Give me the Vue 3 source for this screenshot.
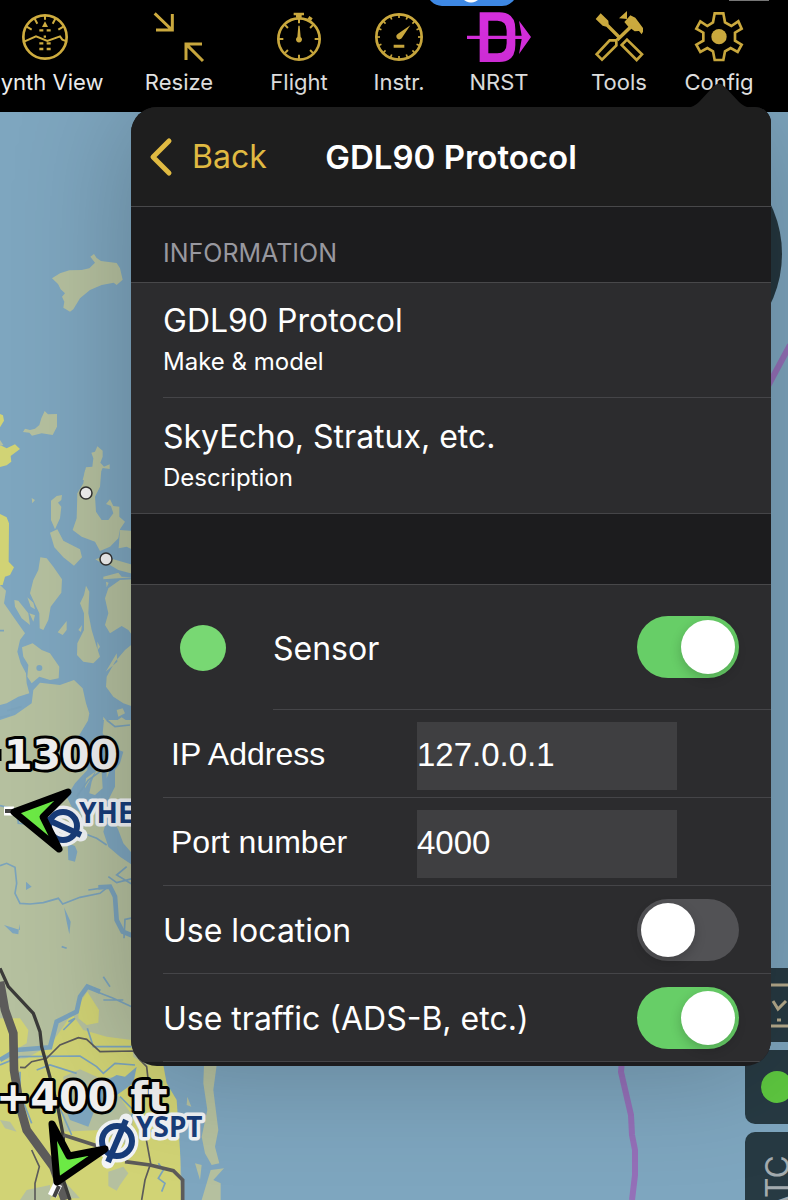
<script setup>
import { ref } from 'vue'

const information = [
  { value: 'GDL90 Protocol', caption: 'Make & model' },
  { value: 'SkyEcho, Stratux, etc.', caption: 'Description' }
]

const sensor = ref(true)
const ipAddress = ref('127.0.0.1')
const port = ref('4000')
const useLocation = ref(false)
const useTraffic = ref(true)

const flightTicks = [0, 45, 90, 135, 180, 225, 270, 315]
const gaugeTicks = Array.from({ length: 16 }, (_, i) => i * 22.5)
</script>

<template>
  <div class="app">
    <svg class="map" viewBox="0 0 788 1200" preserveAspectRatio="xMinYMin slice" aria-hidden="true">
      <rect width="788" height="1200" class="sea" />

      <!-- northern islands -->
      <g transform="translate(0 230) scale(0.33333)">
        <path class="land" d="M156 145L180 130L208 121L245 120L268 115L285 98L271 80L282 72L290 84L303 93L350 99L360 115L368 149L350 165L341 158L305 165L270 180L240 205L220 238L210 245L190 233L193 215L186 200L195 190L182 178L174 162Z" />
        <path class="land" d="M69 606L75 596L90 600L105 596L118 585L124 565L134 543L144 553L171 552L171 590L158 615L125 610L96 617L88 608Z" />
        <path class="land" d="M248 750L258 712L277 710L280 685L274 668L285 665L292 649L308 662L308 680L301 698L312 710L329 703L329 717L308 714L300 730L300 750Z" />
        <path class="field" d="M0 552L9 556L12 572L0 592ZM0 645L20 655L45 643L60 657L32 678L34 695L20 706L0 711Z" />
        <path class="land" d="M0 630L10 645L0 648Z" />
      </g>

      <!-- archipelago -->
      <g transform="translate(0 470) scale(0.33333)">
        <path class="land" d="M255 0L304 0L300 50L285 80L288 125L305 150L325 150L340 130L333 108L318 102L330 88L340 108L358 110L358 140L375 155L360 178L355 205L330 230L300 243L285 215L245 200L218 180L230 145L232 70L250 40Z" />
        <path class="land" d="M360 180L400 183L400 240L380 230L356 235ZM286 268L305 262L340 268L400 285L400 312L355 300L330 285L305 280ZM310 320L355 308L365 320L400 322L310 328Z" />
        <path class="land" d="M153 92L170 78L186 75L184 90L174 98L184 110L180 145L165 178L153 150ZM150 188L172 178L190 212L240 238L246 262L222 287L190 262L163 232Z" />
        <path class="land" d="M121 262L140 265L160 290L186 328L184 368L152 410L145 450L130 480L119 475L118 430L90 370L100 330L115 300Z" />
        <path class="land" d="M43 390L55 392L85 430L90 465L65 445L45 410ZM82 382L100 398L105 418L92 410ZM88 430L105 436L100 455ZM95 84L105 90L97 100ZM173 487L200 453L200 480L188 495Z" />
        <path class="land" d="M258 347L268 365L265 430L275 480L290 530L300 560L280 580L250 575L231 555L232 520L252 480L252 430L240 400L252 375ZM235 480L246 465L243 486ZM292 515L300 530L293 540Z" />
        <path class="land" d="M66 532L98 520L125 540L150 550L178 590L176 625L150 630L118 620L95 640L82 620L85 585L70 560Z" />
        <path class="land" d="M400 328L360 330L325 355L315 385L325 430L315 465L330 490L365 468L385 480L400 500ZM318 335L326 338L320 352ZM400 520L375 540L345 575L320 620L318 650L340 680L370 700L400 710ZM317 605L335 575L350 550L352 575Z" />
        <path class="field" d="M0 132L20 142L27 160L26 275L42 292L30 315L15 320L8 345L0 345Z" />
        <path class="land" d="M0 345L18 362L12 400L40 440L75 490L60 510L52 545L62 580L78 610L80 640L88 670L55 680L20 700L0 705ZM0 780L0 750L45 735L95 700L100 660L120 638L180 645L222 630L248 655L258 700L268 730L262 762L240 780Z" />
        <path class="land" d="M310 740L322 755L315 780L308 775ZM350 720L368 715L375 730L355 740ZM345 755L365 742L385 755L380 768L355 768Z" />
        <circle cx="118" cy="594" r="9" class="sea" />
        <path class="creek" d="M0 482L12 482M22 722L65 710M0 742L30 735" />
        <path class="land" d="M320 780L340 772L400 770L400 780Z" />
      </g>

      <!-- mainland -->
      <g transform="translate(0 720) scale(0.33333)">
        <path class="land" d="M0 0L400 0L400 740L0 740Z" />
        <path class="sea" d="M265 0L312 0L308 40L330 80L370 95L360 130L345 150L345 200L325 240L335 290L355 330L370 370L405 410L405 440L360 410L325 380L310 335L320 300L300 275L245 280L215 260L200 230L225 190L262 150L262 120L235 85L235 50Z" />
        <path class="land" d="M288 152L305 155L308 205L285 225L268 220L275 185ZM320 110L345 110L320 175ZM258 175L285 155L255 205Z" />
        <path class="sea" d="M203 370L225 378L232 395L225 425L205 420ZM78 485L95 500L78 510ZM192 562L212 605L208 643L200 605ZM12 615L60 630L58 612L55 643L38 640Z" />
        <path class="creek" d="M0 257L50 268L55 310L145 318M0 437L20 430L45 442L50 490L45 520L60 550L90 552L130 548L175 535L188 552L240 532L300 520L325 500M230 230L265 180L300 155M250 340L290 355L320 375M185 680L200 685M265 510L300 505M325 470L350 488L400 475M380 440L350 465L400 495" />
        <path class="river" d="M295 502L330 500L345 530L350 600L368 635L400 648" />
        <path class="creek" d="M372 655L375 598L400 593M320 0L345 20L390 15" />
      </g>

      <!-- coast and city -->
      <g transform="translate(0 950) scale(0.33333)">
        <path class="land" d="M0 0H640V130H0Z" />
        <path class="land" d="M0 120H500V750H0Z" />
        <path class="sea" d="M470 340L660 340L720 340L720 750H540L542 600L530 500Z" />
        <path class="field" d="M0 205L60 205L85 240L80 280L45 300L0 325ZM235 165L262 125L297 180L295 218L260 225L235 205ZM150 285L190 230L215 190L250 240L320 260L395 270L400 320L440 345L490 345L500 400L530 450L540 600L545 750H150L180 700L130 665L150 600L110 540L60 500L0 500V345L70 330Z" />
        <path class="field" d="M0 330L150 320L180 390L182 560L150 750H0Z" />
        <path class="land" d="M190 380L240 358L300 385L355 380L390 405L350 430L400 500L390 590L300 540L190 545ZM325 665L370 650L385 670L360 705L350 722L325 708ZM0 510L30 515L50 545L15 535ZM80 720L150 705L150 750H60ZM190 690L240 745H200Z" />
        <path class="sea" d="M195 475L250 450L270 420L350 375L375 380L410 350L400 400L330 450L280 490L265 530L210 510Z" />
        <path class="river" d="M0 330L50 300L150 292L170 215L230 185L240 140L262 110L300 125" />
        <path class="creek" d="M0 345L60 320L240 318L290 350L310 370L345 340L405 345M290 125L340 145L395 170M310 80L330 110M205 215L225 205L190 240M310 150L370 150M262 235L280 290L395 290M60 365L60 430L95 520M110 360L150 345L230 370M180 475L215 555M360 440L400 480L390 520M475 640L490 660L475 685L495 700L485 725M450 480L480 490M440 545L520 540" />
        <path class="land" d="M612 345L650 345L640 420L655 540L645 590L658 640L635 645L615 610L605 560L622 480L610 400ZM540 610L548 750L540 700ZM632 660L672 655L640 690L662 700L662 750H605L620 700ZM562 440L574 470L560 465ZM585 640L605 645L600 690Z" />
        <path class="minor-road" d="M60 352L75 353L95 335L140 325L180 285L235 263L260 268L300 305L400 303L420 330L440 350L445 395M95 600L118 650L105 700L105 750M435 520L440 575L452 640L435 690L425 750" />
        <path class="road thick" d="M0 95L15 180L40 250L42 360L60 470L80 540L120 595L160 650L195 750" />
        <path class="road dark" d="M0 55L25 110L100 190L120 245L125 290L155 400L175 480L190 560L190 690L210 750" />
        <path class="road" d="M190 555L300 590M375 635L450 645L520 662L548 690V750" />
      </g>

      <!-- overlays drawn on the chart -->
      <circle cx="667" cy="254" r="115" class="dial" />
      <path class="airspace" d="M790 345L768 386M622 1060L621 1072L631 1115L632 1135L635 1150V1175L632 1200" />
      <circle class="waypoint" cx="86" cy="493" r="6" />
      <circle class="waypoint" cx="106" cy="559" r="6" />

      <g class="airport halo">
        <circle cx="63" cy="826" r="14" /><path d="M46 819L81 835" />
        <circle cx="117" cy="1141" r="15" /><path d="M126 1120L108 1162" />
      </g>
      <g class="airport">
        <circle cx="63" cy="826" r="14" /><path d="M46 819L81 835" />
        <circle cx="117" cy="1141" r="15" /><path d="M126 1120L108 1162" />
      </g>
      <text class="airport-name" x="79" y="823">YHE</text>
      <text class="airport-name" x="136" y="1137">YSPT</text>

      <path class="runway" d="M4 811L14 811M52 1196L58 1184" />
      <path class="runway-dark" d="M5 811L12 811M54 1197L59 1186" />
      <path class="traffic" d="M14 812L68 792L43 817L59 849Z" />
      <path class="traffic" d="M52 1124L69 1156L105 1149L57 1182Z" />
      <text class="altitude" x="4" y="769">1300</text>
      <text class="altitude" x="-4" y="1111">+400 ft</text>
      <path class="altitude-sign" d="M0 749V761" />
    </svg>

    <nav class="toolbar">
      <div class="status-pill"></div>
      <div class="status-bar"></div>
      <div class="tool-group first">
        <button class="tool">
          <svg viewBox="54 30 162 162">
            <circle cx="135" cy="111" r="65" stroke-width="8" />
            <path stroke-width="6" d="M135 46V59M104 56L112 71M166 56L158 71M80 80L95 89M190 80L175 89M74 124L108 109L142 123L180 109L187 119L200 124" />
            <path stroke-width="7" d="M118 91H130M140 91H152M118 130H130M140 130H152M118 147H130M140 147H152M131 110H138" />
            <path class="solid" d="M135 64L144 81H126Z" />
          </svg>
          <span>Synth View</span>
        </button>
      </div>
      <div class="tool-group">
        <button class="tool">
          <svg viewBox="456 30 162 162">
            <path stroke-width="9" d="M464 40L516 90M517 42V90H468M609 183L559 133M606 132H558V180" />
          </svg>
          <span>Resize</span>
        </button>
      </div>
      <div class="tool-group">
        <button class="tool">
          <svg viewBox="36 30 162 162">
            <circle cx="117" cy="117" r="62" stroke-width="8" />
            <path v-for="a in flightTicks" :key="a" stroke-width="6" d="M117 56V70" :transform="`rotate(${a} 117 117)`" />
            <path class="solid" d="M101 38H132V46H125V53H108V46H101ZM148 48L158 55L153 63L143 56ZM115 77H119L122 111A9 9 0 1 1 112 111Z" />
          </svg>
          <span>Flight</span>
        </button>
        <button class="tool">
          <svg viewBox="336 30 162 162">
            <circle cx="417" cy="111" r="68" stroke-width="8" />
            <path v-for="a in gaugeTicks" :key="a" stroke-width="5" d="M417 44V54" :transform="`rotate(${a} 417 111)`" />
            <path class="solid" d="M451 76L426 113A9 9 0 1 1 414 101ZM401 134H433V143H401Z" />
          </svg>
          <span>Instr.</span>
        </button>
        <button class="tool direct">
          <svg viewBox="636 30 162 162">
            <path class="solid" fill-rule="evenodd" d="M659 37H718Q766 37 766 88V135Q766 186 718 186H659ZM685 62V160H712Q740 160 740 130V92Q740 62 712 62Z" />
            <path class="solid" d="M621 107H785L777 62L813 111L777 162L785 117H621Z" />
          </svg>
          <span>NRST</span>
        </button>
      </div>
      <div class="tool-group">
        <button class="tool">
          <svg viewBox="156 30 162 162">
            <path class="solid" d="M182 40L205 62L206 73L239 106L232 113L199 80L188 77L167 57ZM261 33V57L237 55ZM253 66L271 46L286 53L309 84V95L305 103L297 93L284 94L274 86L235 124L228 116L265 80Z" />
            <path stroke-width="8" d="M229 121H209L170 163L186 179L229 136ZM261 119L306 163L290 180L245 135Z" />
          </svg>
          <span>Tools</span>
        </button>
        <button class="tool">
          <svg viewBox="454 30 162 162">
            <path stroke-width="8" d="M522 40H548L553 67L572 78L593 64L603 86L583 98V122L603 134L591 156L570 144L553 154L548 180H522L517 154L500 144L479 156L467 134L488 122V98L467 86L479 64L500 78L517 67Z" />
            <circle cx="535" cy="110" r="23" class="solid" />
          </svg>
          <span>Config</span>
        </button>
      </div>
    </nav>

    <aside class="side-buttons">
      <button class="side-button" aria-label="Profile">
        <svg viewBox="0 0 74 74">
          <path d="M18 17H66V58H18ZM28 33L33 41L41 33M32 52H36" />
        </svg>
      </button>
      <button class="side-button" aria-label="Connection"><span class="status-dot"></span></button>
      <button class="side-button tall"><span>ATC</span></button>
    </aside>

    <section class="popover">
      <svg class="arrow" viewBox="0 0 64 28" aria-hidden="true">
        <path d="M0 28Q7 27 12 22L26 7Q32 0 38 7L52 22Q57 27 64 28Z" />
      </svg>
      <div class="panel">
        <header class="header">
          <button class="back">
            <svg width="24" height="40" viewBox="0 0 24 40"><path d="M20 4L4 20L20 36" /></svg>
            Back
          </button>
          <h1>GDL90 Protocol</h1>
        </header>

        <h2 class="section-title">INFORMATION</h2>
        <div class="group">
          <div v-for="item in information" :key="item.caption" class="info-row">
            <p class="info-value">{{ item.value }}</p>
            <p class="info-caption">{{ item.caption }}</p>
          </div>
        </div>

        <div class="spacer"></div>

        <div class="group">
          <div class="sensor-row">
            <span class="sensor-dot"></span>
            <div class="sensor-content">
              <label for="sensor">Sensor</label>
              <input id="sensor" v-model="sensor" type="checkbox" class="switch" />
            </div>
          </div>
          <div class="row field-row">
            <label for="ip">IP Address</label>
            <input id="ip" v-model="ipAddress" type="text" class="field-input" />
          </div>
          <div class="row field-row">
            <label for="port">Port number</label>
            <input id="port" v-model="port" type="text" class="field-input" />
          </div>
          <div class="row">
            <label for="location">Use location</label>
            <input id="location" v-model="useLocation" type="checkbox" class="switch" />
          </div>
          <div class="row">
            <label for="traffic">Use traffic (ADS-B, etc.)</label>
            <input id="traffic" v-model="useTraffic" type="checkbox" class="switch" />
          </div>
        </div>
      </div>
    </section>
  </div>
</template>

<style>
body {
  margin: 0;
  background: #7ea6bf;
}
</style>

<style scoped>
.app {
  position: relative;
  min-height: 100vh;
  overflow: hidden;
  font-family: Inter, "Liberation Sans", sans-serif;
  color: #fff;
}

button {
  padding: 0;
  border: none;
  background: transparent;
  font: inherit;
  color: inherit;
  cursor: pointer;
}

/* chart */
.map {
  position: absolute;
  inset: 0;
  width: 100%;
  height: 100%;
}

.sea {
  fill: #7ea6bf;
}

.land {
  fill: #b5c09f;
}

.field {
  fill: #d1d375;
}

.creek,
.river {
  fill: none;
  stroke: #7ba3bc;
  stroke-width: 5;
}

.river {
  stroke-width: 14;
}

.road,
.minor-road {
  fill: none;
  stroke: #5c5b5a;
  stroke-width: 11;
}

.minor-road {
  stroke-width: 5;
}

.road.thick {
  stroke-width: 26;
}

.road.dark {
  stroke: #3b3b39;
  stroke-width: 10;
}

.dial {
  fill: #25373f;
}

.airspace {
  fill: none;
  stroke: #9470b8;
  stroke-width: 6;
}

.waypoint {
  fill: #f4f4f4;
  stroke: #333;
  stroke-width: 1.5;
}

.airport {
  fill: none;
  stroke: #183d7a;
  stroke-width: 6;
}

.airport.halo {
  stroke: #f2f4f6;
  stroke-width: 13;
  stroke-linecap: round;
}

.airport-name {
  font: bold 28px "Noto Sans", sans-serif;
  fill: #183d7a;
  stroke: #f2f4f6;
  stroke-width: 7;
  stroke-linejoin: round;
  paint-order: stroke;
}

.altitude {
  font: bold 41px "DejaVu Sans", sans-serif;
  fill: #f2f2f2;
  stroke: #000;
  stroke-width: 6;
  stroke-linejoin: round;
  paint-order: stroke;
}

.altitude-sign {
  stroke: #000;
  stroke-width: 3;
}

.traffic {
  fill: #6cea45;
  stroke: #000;
  stroke-width: 7;
  stroke-linejoin: round;
}

.runway {
  stroke: #fff;
  stroke-width: 9;
}

.runway-dark {
  stroke: #444;
  stroke-width: 4;
}

/* toolbar */
.toolbar {
  position: relative;
  z-index: 1;
  display: flex;
  justify-content: flex-end;
  gap: 20px;
  height: 112px;
  padding-right: 19px;
  box-sizing: border-box;
  background: #000;
}

.status-pill {
  position: absolute;
  top: -24px;
  left: 427px;
  width: 90px;
  height: 30px;
  border-radius: 15px;
  background: radial-gradient(circle at 44px 16px, #fff 10px, #3f8ae6 11px);
}

.status-bar {
  position: absolute;
  top: 0;
  right: 19px;
  width: 40px;
  height: 1px;
  background: #777;
}

.tool-group {
  display: flex;
  flex: none;
}

.tool-group.first {
  margin-right: 14px;
}

.tool {
  display: flex;
  flex-direction: column;
  align-items: center;
  gap: 4px;
  width: 100px;
  padding-top: 10px;
  font-size: 22px;
  line-height: 28px;
  white-space: nowrap;
  color: #eee;
}

.tool svg {
  width: 54px;
  height: 54px;
  overflow: visible;
  fill: none;
  stroke: #ceac3f;
}

.tool .solid {
  fill: #ceac3f;
  stroke: none;
}

.tool.direct .solid {
  fill: #d82fe0;
}

/* side buttons */
.side-buttons {
  position: absolute;
  top: 968px;
  right: -31px;
  display: flex;
  flex-direction: column;
  gap: 8px;
  width: 74px;
}

.side-button {
  display: flex;
  align-items: center;
  height: 74px;
  border-radius: 10px;
  background: #273a43;
}

.side-button svg {
  width: 74px;
  height: 74px;
  fill: none;
  stroke: #b9ae8f;
  stroke-width: 3;
}

.side-button.tall {
  height: 108px;
  justify-content: center;
  padding-right: 10px;
}

.side-button.tall span {
  writing-mode: vertical-rl;
  transform: rotate(180deg);
  font-size: 32px;
  color: #a3abaf;
}

.status-dot {
  width: 32px;
  height: 32px;
  margin-left: 16px;
  border-radius: 50%;
  background: #5ec840;
}

/* popover */
.popover {
  position: relative;
  z-index: 2;
  margin: -5px 17px 0 131px;
}

.panel {
  overflow: hidden;
  border-radius: 26px 16px 26px 26px;
  background: #1c1c1e;
  box-shadow: 0 0 120px rgba(0, 0, 0, 0.24);
}

.arrow {
  position: absolute;
  top: -27px;
  right: 20px;
  width: 64px;
  height: 28px;
  fill: #1e1e1e;
}

.header {
  display: grid;
  grid-template-columns: 1fr auto 1fr;
  align-items: center;
  height: 100px;
  padding: 0 18px;
  box-sizing: border-box;
  border-bottom: 1px solid #48484a;
  background: #1e1e1e;
}

.back {
  display: flex;
  align-items: center;
  gap: 19px;
  font-size: 32px;
  color: #e0ba42;
}

.back svg {
  fill: none;
  stroke: #e0ba42;
  stroke-width: 5;
  stroke-linecap: round;
  stroke-linejoin: round;
}

h1 {
  margin: 0;
  font-size: 33px;
  font-weight: 600;
}

.section-title {
  margin: 0;
  padding: 30px 32px 13px;
  font-size: 25px;
  font-weight: 400;
  line-height: 32px;
  color: #98989f;
}

.group {
  background: #2c2c2e;
  border-top: 1px solid #48484a;
  font-size: 32px;
}

.info-row {
  display: flex;
  flex-direction: column;
  gap: 6px;
  height: 115px;
  box-sizing: border-box;
  margin-left: 32px;
  padding-top: 18px;
  border-bottom: 1px solid #454548;
}

.info-row:last-child {
  height: 116px;
  margin-left: 0;
  padding-top: 19px;
  padding-left: 32px;
}

.info-value,
.info-caption {
  margin: 0;
  line-height: 40px;
}

.info-caption {
  font-size: 24px;
  line-height: 30px;
}

.spacer {
  height: 70px;
}

.sensor-row {
  display: flex;
  align-items: center;
  padding-left: 49px;
}

.sensor-dot {
  width: 46px;
  height: 46px;
  border-radius: 50%;
  background: #78d873;
}

.sensor-content,
.row {
  display: flex;
  align-items: center;
  justify-content: space-between;
  height: 88px;
  box-sizing: border-box;
  padding-right: 32px;
  border-bottom: 1px solid #454548;
}

.sensor-content {
  flex: 1;
  height: 125px;
  margin-left: 47px;
}

.sensor-content label,
.row label {
  padding-top: 2px;
}

.row {
  margin-left: 32px;
}

.row:last-child {
  margin-bottom: 4px;
}

.field-row {
  padding: 12px 94px 7px 8px;
  font-family: "Liberation Sans", Arial, sans-serif;
}

.field-row label {
  flex: 0 0 246px;
  padding: 0 0 4px;
}

.field-input {
  flex: 1;
  min-width: 0;
  height: 68px;
  padding: 0 0 2px;
  box-sizing: border-box;
  border: none;
  outline: none;
  border-radius: 0;
  background: #3f3f41;
  font: inherit;
  font-size: 33px;
  color: #fff;
}

.switch {
  appearance: none;
  flex: none;
  width: 102px;
  height: 62px;
  margin: 0;
  padding: 4px;
  box-sizing: border-box;
  border-radius: 31px;
  background: #525255;
  cursor: pointer;
}

.switch::before {
  content: "";
  display: block;
  width: 54px;
  height: 54px;
  border-radius: 50%;
  background: #fff;
  box-shadow: 0 4px 12px rgba(0, 0, 0, 0.2);
}

.switch:checked {
  background: #67ce67;
}

.switch:checked::before {
  margin-left: 40px;
}
</style>
